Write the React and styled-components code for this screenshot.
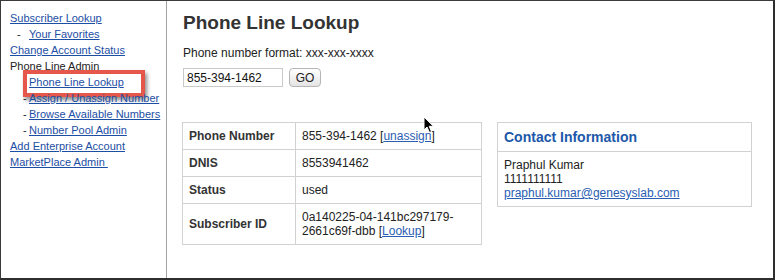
import React from 'react'
import styled, { createGlobalStyle } from 'styled-components'

const GlobalStyle = createGlobalStyle`
	html, body {
		margin: 0;
		padding: 0;
		background: #fff;}
	body {
		font-family: "Liberation Sans", Arial, Helvetica, sans-serif;
		font-size: 12px;
		color: #222;}
`;

const Frame = styled.div`
	position: relative;
	box-sizing: border-box;
	width: 775px;
	height: 280px;
	display: flex;
	border-top: 1px solid #3a3a3a;
	border-left: 1px solid #3a3a3a;
	border-right: 2px solid #2e2e2e;
	border-bottom: 2px solid #2e2e2e;
	overflow: hidden;
`;

const Sidebar = styled.nav`
	box-sizing: border-box;
	width: 166px;
	flex: none;
	padding: 9px 0 0 9px;
	border-right: 1px solid #a3a3a3;
	font-size: 11px;
	line-height: 16px;
`;

const NavLink = styled.a`
	color: #1c4ea4;
	text-decoration: underline;
	cursor: pointer;
`;

const NavRow = styled.div`
	position: relative;
	display: flex;
	align-items: baseline;
	padding-left: ${p => p.$indent || 0}px;
	white-space: nowrap;
`;

const Dash = styled.span`
	width: ${p => p.$width || 7}px;
	flex: none;
`;

const Highlight = styled.span`
	position: absolute;
	left: 13px;
	top: -4px;
	width: 122px;
	height: 27px;
	box-sizing: border-box;
	border: 4px solid #e5574a;
	box-shadow: 2px 3px 4px rgba(0, 0, 0, 0.45);
	pointer-events: none;
`;

const Main = styled.main`
	flex: 1;
	padding: 11px 0 0 15px;
	display: flex;
	flex-direction: column;
`;

const Title = styled.h1`
	margin: 0 0 0 1px;
	font-size: 19px;
	line-height: 22px;
	font-weight: bold;
	color: #333;
`;

const Hint = styled.p`
	margin: 11px 0 0 1px;
	line-height: 16px;
	color: #222;
`;

const SearchRow = styled.form`
	display: flex;
	align-items: center;
	gap: 6px;
	margin: 7px 0 0 1px;
`;

const Input = styled.input`
	box-sizing: border-box;
	width: 100px;
	height: 19px;
	padding: 0 3px;
	border: 1px solid #c9c9c9;
	font-family: inherit;
	font-size: 12px;
	color: #111;
	outline: none;
`;

const GoButton = styled.button`
	box-sizing: border-box;
	width: 32px;
	height: 19px;
	padding: 0;
	border: 1px solid #b5b5b5;
	border-radius: 4px;
	background: linear-gradient(#ffffff, #e4e4e4);
	font-family: inherit;
	font-size: 12px;
	color: #222;
`;

const Panels = styled.div`
	display: flex;
	align-items: flex-start;
	gap: 15px;
	margin-top: 35px;
`;

const InfoTable = styled.table`
	width: 300px;
	border-collapse: collapse;
	border: 1px solid #d2d2d2;

	th, td {
		border: 1px solid #d2d2d2;
		padding: 6px;
		line-height: 14px;
		text-align: left;
		vertical-align: middle;}
	th {
		width: 100px;
		font-weight: bold;
		color: #333;}
	td {
		color: #222;}
`;

const InlineLink = styled.a`
	color: #2a5db3;
	text-decoration: underline;
`;

const ContactBox = styled.section`
	box-sizing: border-box;
	width: 255px;
	border: 1px solid #d2d2d2;
`;

const ContactHead = styled.h2`
	margin: 0;
	padding: 6px 6px;
	font-size: 14px;
	line-height: 16px;
	font-weight: bold;
	color: #1d58aa;
	border-bottom: 1px solid #d2d2d2;
`;

const ContactBody = styled.div`
	padding: 6px 6px;
	line-height: 14px;
	color: #222;
`;

const Cursor = styled.svg`
	position: absolute;
	left: 422px;
	top: 115px;
`;

const nav = [
	{ label: 'Subscriber Lookup', link: true },
	{ label: 'Your Favorites', link: true, sub: true, indent: 7, dash: 12 },
	{ label: 'Change Account Status', link: true },
	{ label: 'Phone Line Admin' },
	{ label: 'Phone Line Lookup', link: true, sub: true, active: true },
	{ label: 'Assign / Unassign Number', link: true, sub: true },
	{ label: 'Browse Available Numbers', link: true, sub: true },
	{ label: 'Number Pool Admin', link: true, sub: true },
	{ label: 'Add Enterprise Account', link: true },
	{ label: 'MarketPlace Admin\u00a0', link: true },
]

const App = () => {
	return (
		<>
			<GlobalStyle />
			<Frame>
				<Sidebar>
					{ nav.map( (item, index) => (
						<NavRow key={index} $indent={item.sub ? (item.indent ?? 13) : 0}>
							{ item.sub && <Dash $width={item.dash ?? 6}>-</Dash> }
							{ item.link ? <NavLink>{item.label}</NavLink> : item.label }
							{ item.active && <Highlight /> }
						</NavRow>
					))}
				</Sidebar>

				<Main>
					<Title>Phone Line Lookup</Title>
					<Hint>Phone number format: xxx-xxx-xxxx</Hint>
					<SearchRow onSubmit={e => e.preventDefault()}>
						<Input defaultValue='855-394-1462' />
						<GoButton type='submit'>GO</GoButton>
					</SearchRow>

					<Panels>
						<InfoTable>
							<tbody>
								<tr>
									<th>Phone Number</th>
									<td>855-394-1462 [<InlineLink>unassign</InlineLink>]</td>
								</tr>
								<tr>
									<th>DNIS</th>
									<td>8553941462</td>
								</tr>
								<tr>
									<th>Status</th>
									<td>used</td>
								</tr>
								<tr>
									<th>Subscriber ID</th>
									<td>0a140225-04-141bc297179-<br />2661c69f-dbb [<InlineLink>Lookup</InlineLink>]</td>
								</tr>
							</tbody>
						</InfoTable>

						<ContactBox>
							<ContactHead>Contact Information</ContactHead>
							<ContactBody>
								<div>Praphul Kumar</div>
								<div>1111111111</div>
								<InlineLink>praphul.kumar@genesyslab.com</InlineLink>
							</ContactBody>
						</ContactBox>
					</Panels>
				</Main>

				<Cursor width='12' height='18' viewBox='0 0 12 18'>
					<path d='M1 1 L1 14 L4 11 L6.5 16.5 L8.5 15.6 L6.2 10.3 L10.5 10.3 Z' fill='#000' stroke='#fff' strokeWidth='1' strokeLinejoin='round' />
				</Cursor>
			</Frame>
		</>
	)
}

export default App
